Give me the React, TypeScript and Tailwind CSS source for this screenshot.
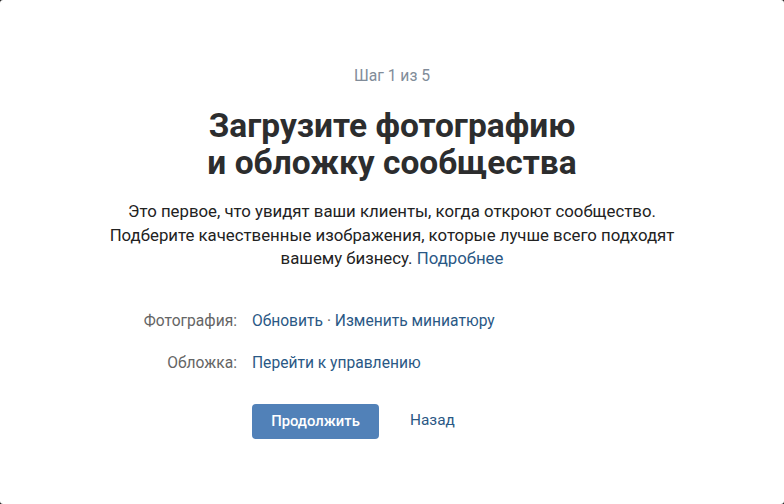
export default function App() {
  return (
    <div className="w-[784px] h-[504px] bg-[#1a1a1a]">
      <div
        className="w-full h-full bg-white rounded-[3px] flex flex-col items-center pt-[66px]"
        style={{ fontFamily: 'Roboto, "Noto Sans", sans-serif' }}
      >
        <p className="text-[15.7px] leading-[20px] text-[#818c99]">Шаг 1 из 5</p>

        <h1 className="mt-[21px] text-[33.5px] leading-[37px] font-bold text-[#2c2d2e] text-center">
          Загрузите фотографию
          <br />
          и обложку сообщества
        </h1>

        <p className="mt-[19px] w-[620px] text-center text-[16.8px] leading-[23.5px] text-[#222]">
          Это первое, что увидят ваши клиенты, когда откроют сообщество.
          <br />
          Подберите качественные изображения, которые лучше всего подходят
          <br />
          вашему бизнесу. <a className="text-[#2a5885]">Подробнее</a>
        </p>

        <div className="mt-[40px] w-full flex flex-col gap-[22px] text-[15.6px] leading-[20px]">
          <div className="flex">
            <div className="w-[237px] text-right text-[#656565]">Фотография:</div>
            <div className="pl-[15px] text-[#2a5885]">
              Обновить <span className="text-[#656565]">·</span> Изменить миниатюру
            </div>
          </div>
          <div className="flex">
            <div className="w-[237px] text-right text-[#656565]">Обложка:</div>
            <div className="pl-[15px] text-[#2a5885]">Перейти к управлению</div>
          </div>
        </div>

        <div className="mt-[31px] w-full flex items-center pl-[252px] gap-[31px]">
          <button className="w-[127px] h-[35px] rounded-[4px] bg-[#5181b8] text-white text-[14.8px] font-medium">
            Продолжить
          </button>
          <a className="text-[15.4px] text-[#2a5885]">Назад</a>
        </div>
      </div>
    </div>
  )
}
